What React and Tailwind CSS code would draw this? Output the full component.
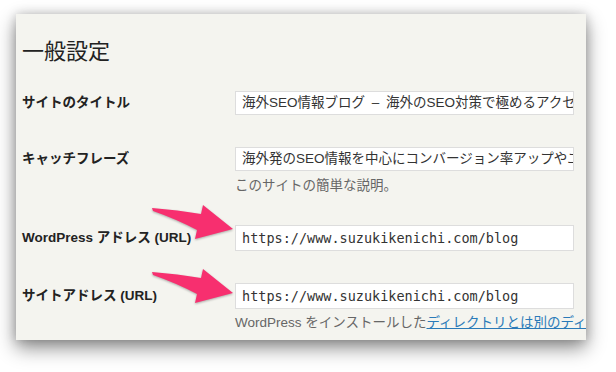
import React from "react";

function Arrow({ dy }) {
  return (
    <path
      transform={`translate(0 ${dy})`}
      d="M152 208 Q178 210 201 214 L203 205 L233 229 L195 239 L197 230 Q176 219 153 211 Z"
      fill="#f72f6f"
    />
  );
}

const label = "w-[213px] shrink-0 text-[13.5px] font-bold font-['Liberation_Sans','Noto_Sans_CJK_JP',sans-serif]";
const field =
  "w-[339px] shrink-0 bg-white border border-[#dddddd] pl-[6px] flex items-center overflow-hidden whitespace-nowrap text-[#333]";

export default function App() {
  return (
    <div className="relative w-[616px] h-[372px] bg-white overflow-hidden">
      <div className="pl-[16px] pt-[14px]">
        <div className="w-[570px] h-[326px] overflow-hidden bg-[#f4f4ef] shadow-[0_8px_18px_rgba(0,0,0,0.45),0_0_10px_rgba(0,0,0,0.18)] pl-[6px] text-[#222]">
          <h1 className="pt-[20px] text-[22px] leading-[30px] font-normal text-[#222] font-['Noto_Sans_CJK_JP',sans-serif]">
            一般設定
          </h1>

          <div className="mt-[27px] flex items-center h-[24px]">
            <div className={label}>サイトのタイトル</div>
            <div className={`${field} h-[24px] text-[13.5px] font-['Liberation_Sans','Noto_Sans_CJK_JP',sans-serif]`}>
              {"海外SEO情報ブログ\u2002–\u2002海外のSEO対策で極めるアクセス解析"}
            </div>
          </div>

          <div className="mt-[32px] flex items-center h-[24px]">
            <div className={label}>キャッチフレーズ</div>
            <div className={`${field} h-[24px] text-[13.5px] font-['Liberation_Sans','Noto_Sans_CJK_JP',sans-serif]`}>
              海外発のSEO情報を中心にコンバージョン率アップやユーザビリティ
            </div>
          </div>
          <div className="mt-[6px] pl-[213px] text-[13.5px] leading-[18px] text-[#666] font-['Liberation_Sans','Noto_Sans_CJK_JP',sans-serif]">
            このサイトの簡単な説明。
          </div>

          <div className="mt-[30px] flex items-center h-[26px]">
            <div className={label}>WordPress アドレス (URL)</div>
            <div className={`${field} h-[26px] text-[13.5px] font-['DejaVu_Sans_Mono',monospace]`}>
              https://www.suzukikenichi.com/blog
            </div>
          </div>

          <div className="mt-[32px] flex items-center h-[26px]">
            <div className={label}>サイトアドレス (URL)</div>
            <div className={`${field} h-[26px] text-[13.5px] font-['DejaVu_Sans_Mono',monospace]`}>
              https://www.suzukikenichi.com/blog
            </div>
          </div>
          <div className="mt-[5px] pl-[213px] text-[13.5px] leading-[18px] text-[#666] whitespace-nowrap font-['Liberation_Sans','Noto_Sans_CJK_JP',sans-serif]">
            WordPress をインストールした<span className="text-[#2a7ab8] underline">ディレクトリとは別のディレクトリ</span>
          </div>
        </div>
      </div>

      <svg
        className="absolute left-0 top-0 drop-shadow-[0_1px_1px_rgba(0,0,0,0.3)]"
        width="616"
        height="372"
        viewBox="0 0 616 372"
      >
        <Arrow dy={0} />
        <Arrow dy={64} />
      </svg>
    </div>
  );
}
